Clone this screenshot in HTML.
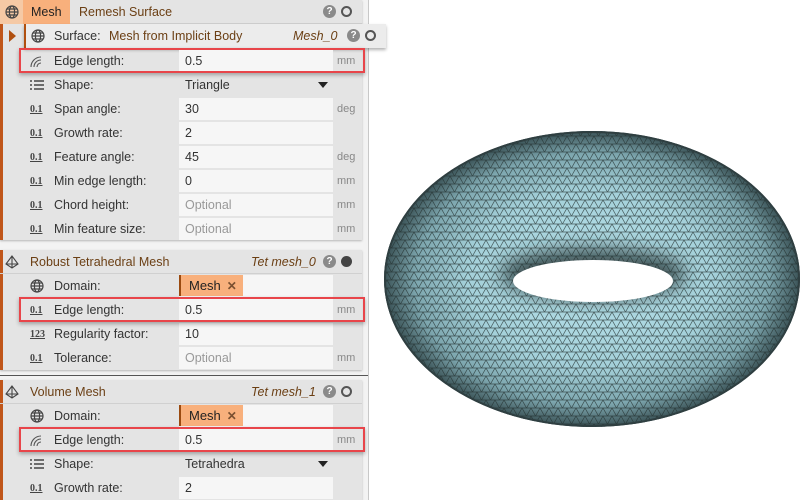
<!DOCTYPE html>
<html><head><meta charset="utf-8"><style>
*{margin:0;padding:0;box-sizing:border-box}
body{width:806px;height:500px;background:#fff;position:relative;overflow:hidden;font-family:"Liberation Sans",sans-serif;font-size:12.5px;color:#333}
.abs{position:absolute}
.gutter{left:0;top:0;width:369px;height:500px;background:#f3f3f3;border-right:1px solid #c8c8c8}
.card{left:0;width:362px;background:#e4e4e4;box-shadow:0 1px 2px rgba(0,0,0,.25)}
.ob{left:0;width:3px;background:#c0561a}
.row{left:0;width:362px;height:24px}
.lab{position:absolute;left:54px;top:5px;white-space:nowrap}
.inp{position:absolute;left:179px;top:1px;width:154px;height:22px;background:#f6f6f6;padding:4px 0 0 6px}
.ph{color:#999}
.unit{position:absolute;left:337px;top:6px;font-size:11px;color:#888}
.ic{position:absolute;left:30px;top:7px;font-size:10px;font-family:"Liberation Serif",serif;text-decoration:underline;color:#444;font-weight:bold}
.hdr{left:0;width:362px;height:24px;border-bottom:1px solid #d0d0d0}
.ttl{position:absolute;left:30px;top:5px;color:#6b3f14}
.red{position:absolute;left:19px;width:346px;height:25px;border:2px solid #e8454a;box-shadow:0 2px 4px rgba(0,0,0,.3)}
.q{position:absolute;top:5px;width:13px;height:13px;border-radius:50%;background:#8a8a8a;color:#fff;font-size:10px;font-weight:bold;text-align:center;line-height:13px}
.o{position:absolute;top:6px;width:11px;height:11px;border-radius:50%;border:2px solid #555}
.tag{position:absolute;left:179px;top:1px;width:64px;height:21px;background:#f8b07c;border-left:2px solid #9a4a10;padding:3px 0 0 8px;font-size:13px;color:#222}
.tag b{font-weight:bold;color:#7a5030;font-size:12px;margin-left:6px}
</style></head><body>
<div class="abs gutter"></div>

<div class="abs card" style="top:0;height:240px"></div>
<div class="abs ob" style="top:0;height:240px"></div>
<div class="abs hdr" style="top:0;background:#e4e4e4">
 <div class="abs" style="left:0;top:0;width:23px;height:24px;background:#f5c9a5"></div>
 <svg class="abs" style="left:5px;top:5px" width="14" height="14" viewBox="0 0 14 14" fill="none" stroke="#444" stroke-width="1.2"><circle cx="7" cy="7" r="6"/><ellipse cx="7" cy="7" rx="2.6" ry="6"/><path d="M1 7h12M2 4h10M2 10h10"/></svg>
 <div class="abs" style="left:23px;top:0;width:47px;height:24px;background:#f8b07c;padding:5px 0 0 8px;color:#222">Mesh</div>
 <div class="abs" style="left:79px;top:5px;color:#6b3f14">Remesh Surface</div>
 <div class="q" style="left:323px">?</div><div class="o" style="left:341px"></div>
</div>
<div class="abs" style="left:9px;top:30px;width:0;height:0;border-top:6px solid transparent;border-bottom:6px solid transparent;border-left:7px solid #b05010"></div>
<div class="abs" style="left:24px;top:24px;width:362px;height:24px;background:#ececec;border-left:2px solid #b05010;box-shadow:0 2px 3px rgba(0,0,0,.3)">
 <svg class="abs" style="left:5px;top:5px" width="14" height="14" viewBox="0 0 14 14" fill="none" stroke="#444" stroke-width="1.2"><circle cx="7" cy="7" r="6"/><ellipse cx="7" cy="7" rx="2.6" ry="6"/><path d="M1 7h12M2 4h10M2 10h10"/></svg>
 <div class="abs" style="left:28px;top:5px">Surface:</div>
 <div class="abs" style="left:83px;top:5px;color:#6b3f14">Mesh from Implicit Body</div>
 <div class="abs" style="left:267px;top:5px;color:#6b3f14;font-style:italic">Mesh_0</div>
 <div class="q" style="left:321px">?</div><div class="o" style="left:339px"></div>
</div>
<div class="abs row" style="top:49px"><svg class="abs" style="left:28px;top:5px" width="16" height="14" viewBox="0 0 16 14" fill="none" stroke="#555" stroke-width="1.1"><path d="M3 13A10 10 0 0 1 13 3M6 13A7 7 0 0 1 13 6M9 13A4 4 0 0 1 13 9"/></svg><div class="lab">Edge length:</div><div class="inp">0.5</div><div class="unit">mm</div></div>
<div class="abs row" style="top:73px"><svg class="abs" style="left:30px;top:7px" width="14" height="10"><path d="M0 1h2M4 1h10M0 5h2M4 5h10M0 9h2M4 9h10" stroke="#444" stroke-width="1.6"/></svg><div class="lab">Shape:</div><div class="inp" style="background:#e4e4e4">Triangle<span class="abs" style="left:139px;top:8px;border-left:5px solid transparent;border-right:5px solid transparent;border-top:6px solid #222"></span></div></div>
<div class="abs row" style="top:97px"><span class="ic">0.1</span><div class="lab">Span angle:</div><div class="inp">30</div><div class="unit">deg</div></div>
<div class="abs row" style="top:121px"><span class="ic">0.1</span><div class="lab">Growth rate:</div><div class="inp">2</div></div>
<div class="abs row" style="top:145px"><span class="ic">0.1</span><div class="lab">Feature angle:</div><div class="inp">45</div><div class="unit">deg</div></div>
<div class="abs row" style="top:169px"><span class="ic">0.1</span><div class="lab">Min edge length:</div><div class="inp">0</div><div class="unit">mm</div></div>
<div class="abs row" style="top:193px"><span class="ic">0.1</span><div class="lab">Chord height:</div><div class="inp ph">Optional</div><div class="unit">mm</div></div>
<div class="abs row" style="top:217px"><span class="ic">0.1</span><div class="lab">Min feature size:</div><div class="inp ph">Optional</div><div class="unit">mm</div></div>
<div class="red" style="top:48px"></div>

<div class="abs card" style="top:250px;height:120px"></div>
<div class="abs ob" style="top:250px;height:120px"></div>
<div class="abs hdr" style="top:250px">
 <svg class="abs" style="left:5px;top:5px" width="14" height="14" viewBox="0 0 14 14" fill="none" stroke="#444" stroke-width="1.1"><path d="M7 1L1 9l6 4 6-4zM7 1v12M1 9h12"/></svg>
 <div class="ttl">Robust Tetrahedral Mesh</div>
 <div class="abs" style="left:251px;top:5px;color:#6b3f14;font-style:italic">Tet mesh_0</div>
 <div class="q" style="left:323px">?</div><div class="abs" style="left:341px;top:6px;width:11px;height:11px;border-radius:50%;background:#444"></div>
</div>
<div class="abs row" style="top:274px"><svg class="abs" style="left:30px;top:5px" width="14" height="14" viewBox="0 0 14 14" fill="none" stroke="#444" stroke-width="1.2"><circle cx="7" cy="7" r="6"/><ellipse cx="7" cy="7" rx="2.6" ry="6"/><path d="M1 7h12M2 4h10M2 10h10"/></svg><div class="lab">Domain:</div><div class="inp"></div><div class="tag">Mesh<b>✕</b></div></div>
<div class="abs row" style="top:298px"><span class="ic">0.1</span><div class="lab">Edge length:</div><div class="inp">0.5</div><div class="unit">mm</div></div>
<div class="abs row" style="top:322px"><span class="ic">123</span><div class="lab">Regularity factor:</div><div class="inp">10</div></div>
<div class="abs row" style="top:346px"><span class="ic">0.1</span><div class="lab">Tolerance:</div><div class="inp ph">Optional</div><div class="unit">mm</div></div>
<div class="red" style="top:297px"></div>
<div class="abs" style="left:0;top:375px;width:368px;height:1px;background:#555"></div>

<div class="abs card" style="top:380px;height:120px"></div>
<div class="abs ob" style="top:380px;height:120px"></div>
<div class="abs hdr" style="top:380px">
 <svg class="abs" style="left:5px;top:5px" width="14" height="14" viewBox="0 0 14 14" fill="none" stroke="#444" stroke-width="1.1"><path d="M7 1L1 9l6 4 6-4zM7 1v12M1 9h12"/></svg>
 <div class="ttl">Volume Mesh</div>
 <div class="abs" style="left:251px;top:5px;color:#6b3f14;font-style:italic">Tet mesh_1</div>
 <div class="q" style="left:323px">?</div><div class="o" style="left:341px"></div>
</div>
<div class="abs row" style="top:404px"><svg class="abs" style="left:30px;top:5px" width="14" height="14" viewBox="0 0 14 14" fill="none" stroke="#444" stroke-width="1.2"><circle cx="7" cy="7" r="6"/><ellipse cx="7" cy="7" rx="2.6" ry="6"/><path d="M1 7h12M2 4h10M2 10h10"/></svg><div class="lab">Domain:</div><div class="inp"></div><div class="tag">Mesh<b>✕</b></div></div>
<div class="abs row" style="top:428px"><svg class="abs" style="left:28px;top:5px" width="16" height="14" viewBox="0 0 16 14" fill="none" stroke="#555" stroke-width="1.1"><path d="M3 13A10 10 0 0 1 13 3M6 13A7 7 0 0 1 13 6M9 13A4 4 0 0 1 13 9"/></svg><div class="lab">Edge length:</div><div class="inp">0.5</div><div class="unit">mm</div></div>
<div class="abs row" style="top:452px"><svg class="abs" style="left:30px;top:7px" width="14" height="10"><path d="M0 1h2M4 1h10M0 5h2M4 5h10M0 9h2M4 9h10" stroke="#444" stroke-width="1.6"/></svg><div class="lab">Shape:</div><div class="inp" style="background:#e4e4e4">Tetrahedra<span class="abs" style="left:139px;top:8px;border-left:5px solid transparent;border-right:5px solid transparent;border-top:6px solid #222"></span></div></div>
<div class="abs row" style="top:476px"><span class="ic">0.1</span><div class="lab">Growth rate:</div><div class="inp">2</div></div>
<div class="red" style="top:427px"></div>

<svg class="abs" style="left:370px;top:0" width="436" height="500" viewBox="370 0 436 500">
<defs>
 <radialGradient id="g" cx="0.5" cy="0.5" r="0.5">
  <stop offset="0" stop-color="#b9e3ec"/><stop offset="0.6" stop-color="#a4d0d9"/><stop offset="0.85" stop-color="#7da6ae"/><stop offset="1" stop-color="#3a5256"/>
 </radialGradient>
 <filter id="b" x="-50%" y="-50%" width="200%" height="200%"><feGaussianBlur stdDeviation="9"/></filter>
 <pattern id="m" width="9" height="8" patternUnits="userSpaceOnUse">
  <path d="M0 0H9M0 0L4.5 8M9 0L4.5 8M0 8H9" stroke="#23302f" stroke-width="0.7" fill="none" opacity="0.75"/>
 </pattern>
 <mask id="k"><rect x="370" y="0" width="436" height="500" fill="#fff"/><ellipse cx="593" cy="281" rx="80" ry="21" fill="#000"/></mask>
</defs>
<g mask="url(#k)">
 <ellipse cx="592" cy="279" rx="208" ry="148" fill="url(#g)"/>
 <ellipse cx="593" cy="274" rx="92" ry="26" fill="#1e2a2c" opacity="0.75" filter="url(#b)"/>
 <ellipse cx="592" cy="279" rx="208" ry="148" fill="url(#m)"/>
 <ellipse cx="592" cy="279" rx="207" ry="147" fill="none" stroke="#2f3f41" stroke-width="2"/>
</g>
</svg>
</body></html>
